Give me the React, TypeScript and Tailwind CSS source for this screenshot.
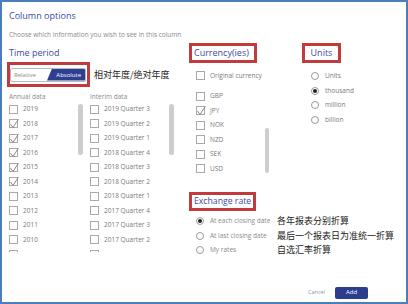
import type { ReactNode } from "react";

const annual = [
    { label: "2019", checked: false },
    { label: "2018", checked: true },
    { label: "2017", checked: true },
    { label: "2016", checked: true },
    { label: "2015", checked: true },
    { label: "2014", checked: true },
    { label: "2013", checked: false },
    { label: "2012", checked: false },
    { label: "2011", checked: false },
    { label: "2010", checked: false },
];

const interim = [
    "2019 Quarter 3",
    "2019 Quarter 2",
    "2019 Quarter 1",
    "2018 Quarter 4",
    "2018 Quarter 3",
    "2018 Quarter 2",
    "2018 Quarter 1",
    "2017 Quarter 4",
    "2017 Quarter 3",
    "2017 Quarter 2",
];

const currencies = [
    { label: "GBP", checked: false },
    { label: "JPY", checked: true },
    { label: "NOK", checked: false },
    { label: "NZD", checked: false },
    { label: "SEK", checked: false },
    { label: "USD", checked: false },
];

const units = [
    { label: "Units", on: false },
    { label: "thousand", on: true },
    { label: "million", on: false },
    { label: "billion", on: false },
];

const rates = [
    { label: "At each closing date", note: "各年报表分别折算", on: true },
    { label: "At last closing date", note: "最后一个报表日为准统一折算", on: false },
    { label: "My rates", note: "自选汇率折算", on: false },
];

function Checkbox({ checked }: { checked: boolean }) {
    return (
        <span className="relative w-[9px] h-[9px] border border-[#a9a9a9] bg-white shrink-0">
            {checked && (
                <svg
                    className="absolute -left-[1px] -top-[2px]"
                    width="11"
                    height="11"
                    viewBox="0 0 11 11"
                >
                    <path
                        d="M1.5 6 L4 9.5 L9.5 1"
                        fill="none"
                        stroke="#7d7d7d"
                        strokeWidth="0.9"
                    />
                </svg>
            )}
        </span>
    );
}

function Radio({ on }: { on: boolean }) {
    return (
        <span className="w-[8px] h-[8px] rounded-full border border-[#9a9a9a] bg-white flex items-center justify-center shrink-0">
            {on && <span className="w-[4px] h-[4px] rounded-full bg-[#222]" />}
        </span>
    );
}

function RedBox({ className, children }: { className: string; children: ReactNode }) {
    return (
        <div className={`border-[3px] border-[#c13a3e] flex items-center whitespace-nowrap ${className}`}>
            {children}
        </div>
    );
}

export default function App() {
    return (
        <div className="w-[408px] h-[304px] border-2 border-[#4a7ebb] bg-white flex flex-col font-['Open_Sans',sans-serif] overflow-hidden">
            {/* Header */}
            <div className="pl-[7px] pt-[7px]">
                <h1 className="h-[14px] leading-[14px] text-[9px] text-[#3b4aa3]">Column options</h1>
                <p className="mt-[7px] h-[10px] leading-[10px] text-[6.5px] text-[#8a8a8a]">
                    Choose which information you wish to see in this column
                </p>
            </div>

            {/* Body */}
            <div className="mt-[3px] h-[240px] flex pl-[5px]">
                {/* Time period */}
                <div className="w-[182px] flex flex-col">
                    <div className="h-[19px] flex items-center pl-[2px] text-[9px] text-[#3b4aa3]">
                        Time period
                    </div>
                    <div className="h-[25px] flex items-center">
                        <RedBox className="w-[83px] h-[25px]">
                            <div className="w-[76px] h-[14px] border border-[#b8b8b8] rounded-[2px] flex overflow-hidden text-[6px] leading-none">
                                <span className="w-[36px] flex items-center pl-[3px] text-[#8c8c8c]">Relative</span>
                                <span className="flex-1 flex items-center justify-end pr-[4px] bg-[#2e3e92] text-white [clip-path:polygon(5px_0,100%_0,100%_100%,0_100%)]">
                                    Absolute
                                </span>
                            </div>
                        </RedBox>
                        <span className="ml-[4px] text-[9px] text-[#222] font-['Noto_Sans_CJK_SC',sans-serif]">
                            相对年度/绝对年度
                        </span>
                    </div>
                    <div className="mt-[5px] h-[10px] flex items-center pl-[2px] text-[6.5px] text-[#8a8a8a]">
                        <span className="w-[81px]">Annual data</span>
                        <span>Interim data</span>
                    </div>
                    <div className="h-[150px] overflow-hidden flex pl-[2px]">
                        <div className="w-[69px]">
                            {annual.map((y) => (
                                <div key={y.label} className="h-[14.5px] flex items-center gap-[5px] text-[6.5px] text-[#7a7a7a]">
                                    <Checkbox checked={y.checked} />
                                    <span>{y.label}</span>
                                </div>
                            ))}
                            {/* next row, scrolled out of view */}
                            <div className="h-[14.5px] flex items-center">
                                <Checkbox checked={false} />
                            </div>
                        </div>
                        <div className="w-[5px] h-[51px] mt-[2px] rounded-full bg-[#cdcdcd]" />
                        <div className="w-[79px] ml-[7px]">
                            {interim.map((q) => (
                                <div key={q} className="h-[14.5px] flex items-center gap-[5px] text-[6.5px] text-[#7a7a7a]">
                                    <Checkbox checked={false} />
                                    <span className="whitespace-nowrap">{q}</span>
                                </div>
                            ))}
                            <div className="h-[14.5px] flex items-center">
                                <Checkbox checked={false} />
                            </div>
                        </div>
                        <div className="w-[5px] h-[51px] mt-[2px] rounded-full bg-[#cdcdcd]" />
                    </div>
                </div>

                {/* Currency, units, exchange rate */}
                <div className="flex-1 flex flex-col">
                    <div className="flex h-[133px]">
                        <div className="w-[113px] flex flex-col">
                            <RedBox className="w-[68px] h-[20px] pl-[2px] text-[9px] text-[#3b4aa3]">
                                Currency(ies)
                            </RedBox>
                            <div className="mt-[5.5px] h-[14.5px] flex items-center gap-[5px] pl-[7px] text-[6.5px] text-[#7a7a7a]">
                                <Checkbox checked={false} />
                                <span>Original currency</span>
                            </div>
                            <div className="mt-[5.75px] flex pl-[7px]">
                                <div className="w-[69px]">
                                    {currencies.map((c) => (
                                        <div key={c.label} className="h-[14.5px] flex items-center gap-[5px] text-[6.5px] text-[#7a7a7a]">
                                            <Checkbox checked={c.checked} />
                                            <span>{c.label}</span>
                                        </div>
                                    ))}
                                </div>
                                <div className="w-[4px] h-[45px] mt-[39px] rounded-full bg-[#cdcdcd]" />
                            </div>
                        </div>
                        <div className="flex flex-col">
                            <RedBox className="w-[39px] h-[20px] justify-center text-[9px] text-[#3b4aa3]">
                                Units
                            </RedBox>
                            <div className="mt-[5.75px] pl-[9px]">
                                {units.map((u) => (
                                    <div key={u.label} className="h-[14.5px] flex items-center gap-[6px] text-[6.5px] text-[#7a7a7a]">
                                        <Radio on={u.on} />
                                        <span>{u.label}</span>
                                    </div>
                                ))}
                            </div>
                        </div>
                    </div>

                    <div className="mt-[16px] flex flex-col">
                        <RedBox className="w-[67px] h-[19px] pl-[2px] text-[8.7px] text-[#3b4aa3]">
                            Exchange rate
                        </RedBox>
                        <div className="mt-[2.75px] pl-[7px]">
                            {rates.map((r) => (
                                <div key={r.label} className="h-[14.5px] flex items-center text-[6.5px] text-[#8a8a8a]">
                                    <Radio on={r.on} />
                                    <span className="ml-[6px] w-[67px] whitespace-nowrap">{r.label}</span>
                                    <span className="text-[9px] text-[#222] font-['Noto_Sans_CJK_SC',sans-serif] whitespace-nowrap">
                                        {r.note}
                                    </span>
                                </div>
                            ))}
                        </div>
                    </div>
                </div>
            </div>

            {/* Footer */}
            <div className="h-[19px] flex items-center justify-end pr-[38px]">
                <button className="text-[5.5px] text-[#8c94b8] mr-[10px]">Cancel</button>
                <button className="w-[33px] h-[12px] rounded-[2px] bg-[#2d3d8e] text-white text-[6px]">Add</button>
            </div>
        </div>
    );
}
